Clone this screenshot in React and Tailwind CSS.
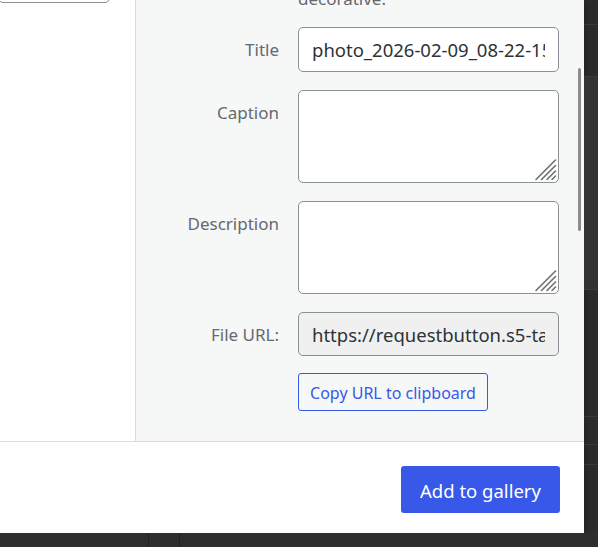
import React from "react";

function Handle() {
  return (
    <svg className="absolute right-[2px] bottom-[2px] pointer-events-none" width="23" height="23" viewBox="0 0 23 23">
      <g stroke="#6f6f6f" strokeWidth="1.6" strokeLinecap="round">
        <line x1="2" y1="21.5" x2="21.5" y2="2" />
        <line x1="7.5" y1="21.5" x2="21.5" y2="7.5" />
        <line x1="13" y1="21.5" x2="21.5" y2="13" />
        <line x1="18" y1="21.5" x2="21.5" y2="18" />
      </g>
    </svg>
  );
}

function Label({ children }) {
  return (
    <div className="text-right text-[17px] leading-[24px] text-[#646970] pt-[11px]">{children}</div>
  );
}

export default function App() {
  return (
    <div className="w-[598px] h-[547px] bg-[#2c2c2c] flex flex-col overflow-hidden font-['Noto_Sans','Open_Sans',sans-serif]">
      <div className="flex h-[533px]">
        <div className="w-[584px] h-[533px] bg-white flex flex-col shadow-[0_0_8px_rgba(0,0,0,0.4)]">
          <div className="flex h-[442px] border-b border-[#dcdcde]">
            <div className="w-[136px] border-r border-[#dcdcde] bg-white">
              <div className="-ml-[2px] -mt-[27px] w-[112px] h-[30px] border border-[#8c8f94] rounded-[5px]" />
            </div>
            <div className="flex-1 bg-[#f6f7f7] relative overflow-hidden">
              <div className="pl-[162px] -mt-[12px] h-[22px] text-[17px] leading-[22px] text-[#646970]">decorative.</div>
              <div className="mt-[17px] grid grid-cols-[143px_261px] gap-x-[19px] gap-y-[18px]">
                <Label>Title</Label>
                <input
                  readOnly
                  defaultValue="photo_2026-02-09_08-22-15"
                  className="h-[45px] w-[261px] border border-[#8c8f94] rounded-[5px] bg-white px-[13px] text-[18.5px] text-[#2c3338] outline-none"
                />
                <Label>Caption</Label>
                <div className="relative h-[93px]">
                  <textarea className="w-full h-full resize-none border border-[#8c8f94] rounded-[5px] bg-white outline-none block" />
                  <Handle />
                </div>
                <Label>Description</Label>
                <div className="relative h-[93px]">
                  <textarea className="w-full h-full resize-none border border-[#8c8f94] rounded-[5px] bg-white outline-none block" />
                  <Handle />
                </div>
                <Label>File URL:</Label>
                <div className="flex flex-col gap-[17px]">
                  <input
                    readOnly
                    defaultValue="https://requestbutton.s5-tastewp.com/wp-content/uploads/2026/02/photo_2026-02-09_08-22-15.jpg"
                    className="h-[44px] w-[261px] border border-[#8c8f94] rounded-[5px] bg-[#f0f0f1] px-[13px] text-[18.5px] text-[#2c3338] outline-none"
                  />
                  <button className="self-start h-[38px] w-[190px] border border-[#3858e9] rounded-[3px] text-[16px] leading-[20px] pt-[2px] text-[#3858e9] bg-transparent">
                    Copy URL to clipboard
                  </button>
                </div>
              </div>
              <div className="absolute right-[3px] top-[68px] w-[3px] h-[163px] bg-[#8c8c8c] rounded-full" />
            </div>
          </div>
          <div className="flex-1 flex justify-end items-start pt-[24px] pr-[24px]">
            <button className="h-[47px] w-[159px] bg-[#3858e9] rounded-[3px] text-white text-[18.5px] leading-[24px] pt-[2px]">Add to gallery</button>
          </div>
        </div>
        <div className="flex-1 flex flex-col">
          <div className="h-[25px] border-b border-[#3a3a3a]" />
          <div className="h-[52px] border-b border-[#3a3a3a]" />
          <div className="h-[213px] border-b border-[#3a3a3a] bg-[#333333]" />
          <div className="h-[127px] border-b border-[#3a3a3a]" />
          <div className="h-[28px] border-b border-[#3a3a3a]" />
          <div className="h-[20px] border-b border-[#3a3a3a]" />
          <div className="flex-1" />
        </div>
      </div>
      <div className="flex-1 flex bg-[#2e2e2e]">
        <div className="w-[148px]" />
        <div className="w-[32px] border-x border-[#222]" />
      </div>
    </div>
  );
}
